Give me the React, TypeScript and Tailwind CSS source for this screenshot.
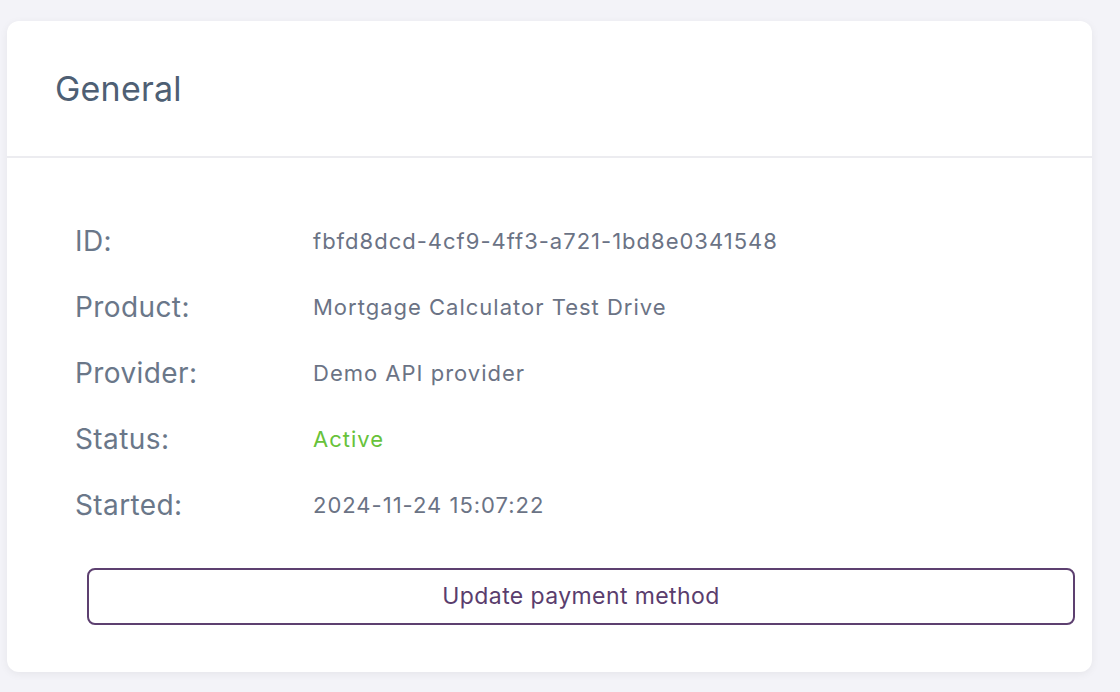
import React from "react";

const rows: { label: string; value: string; green?: boolean }[] = [
  { label: "ID:", value: "fbfd8dcd-4cf9-4ff3-a721-1bd8e0341548" },
  { label: "Product:", value: "Mortgage Calculator Test Drive" },
  { label: "Provider:", value: "Demo API provider" },
  { label: "Status:", value: "Active", green: true },
  { label: "Started:", value: "2024-11-24 15:07:22" },
];

export default function App() {
  return (
    <div
      className="w-[1120px] h-[692px] bg-[#f3f3f8] pt-[21px] pl-[7px] overflow-hidden"
      style={{ fontFamily: "Inter, 'Noto Sans', sans-serif" }}
    >
      <div className="w-[1085px] h-[651px] bg-white rounded-[12px] shadow-[0_2px_8px_rgba(0,0,0,0.06)] flex flex-col">
        <div className="h-[137px] border-b-2 border-[#ececf0] pl-[48px] pt-[48px]">
          <div className="text-[34px] leading-[40px] text-[#4e5f74] tracking-[0.2px]">General</div>
        </div>
        <div className="pt-[50px] pl-[68px] flex flex-col">
          {rows.map((r) => (
            <div key={r.label} className="flex items-center h-[66px]">
              <div className="w-[238px] text-[28px] tracking-[0.4px] text-[#6a7789]">{r.label}</div>
              <div
                className={
                  "text-[22px] tracking-[1px] " +
                  (r.green ? "text-[#67c23a]" : "text-[#6b7385]")
                }
              >
                {r.value}
              </div>
            </div>
          ))}
        </div>
        <div className="pl-[80px] pr-[17px] mt-[30px]">
          <button className="w-full h-[57px] border-2 border-[#5d4070] rounded-[8px] text-[23px] text-[#5a3d6d] tracking-[0.4px] bg-white">
            Update payment method
          </button>
        </div>
      </div>
    </div>
  );
}
